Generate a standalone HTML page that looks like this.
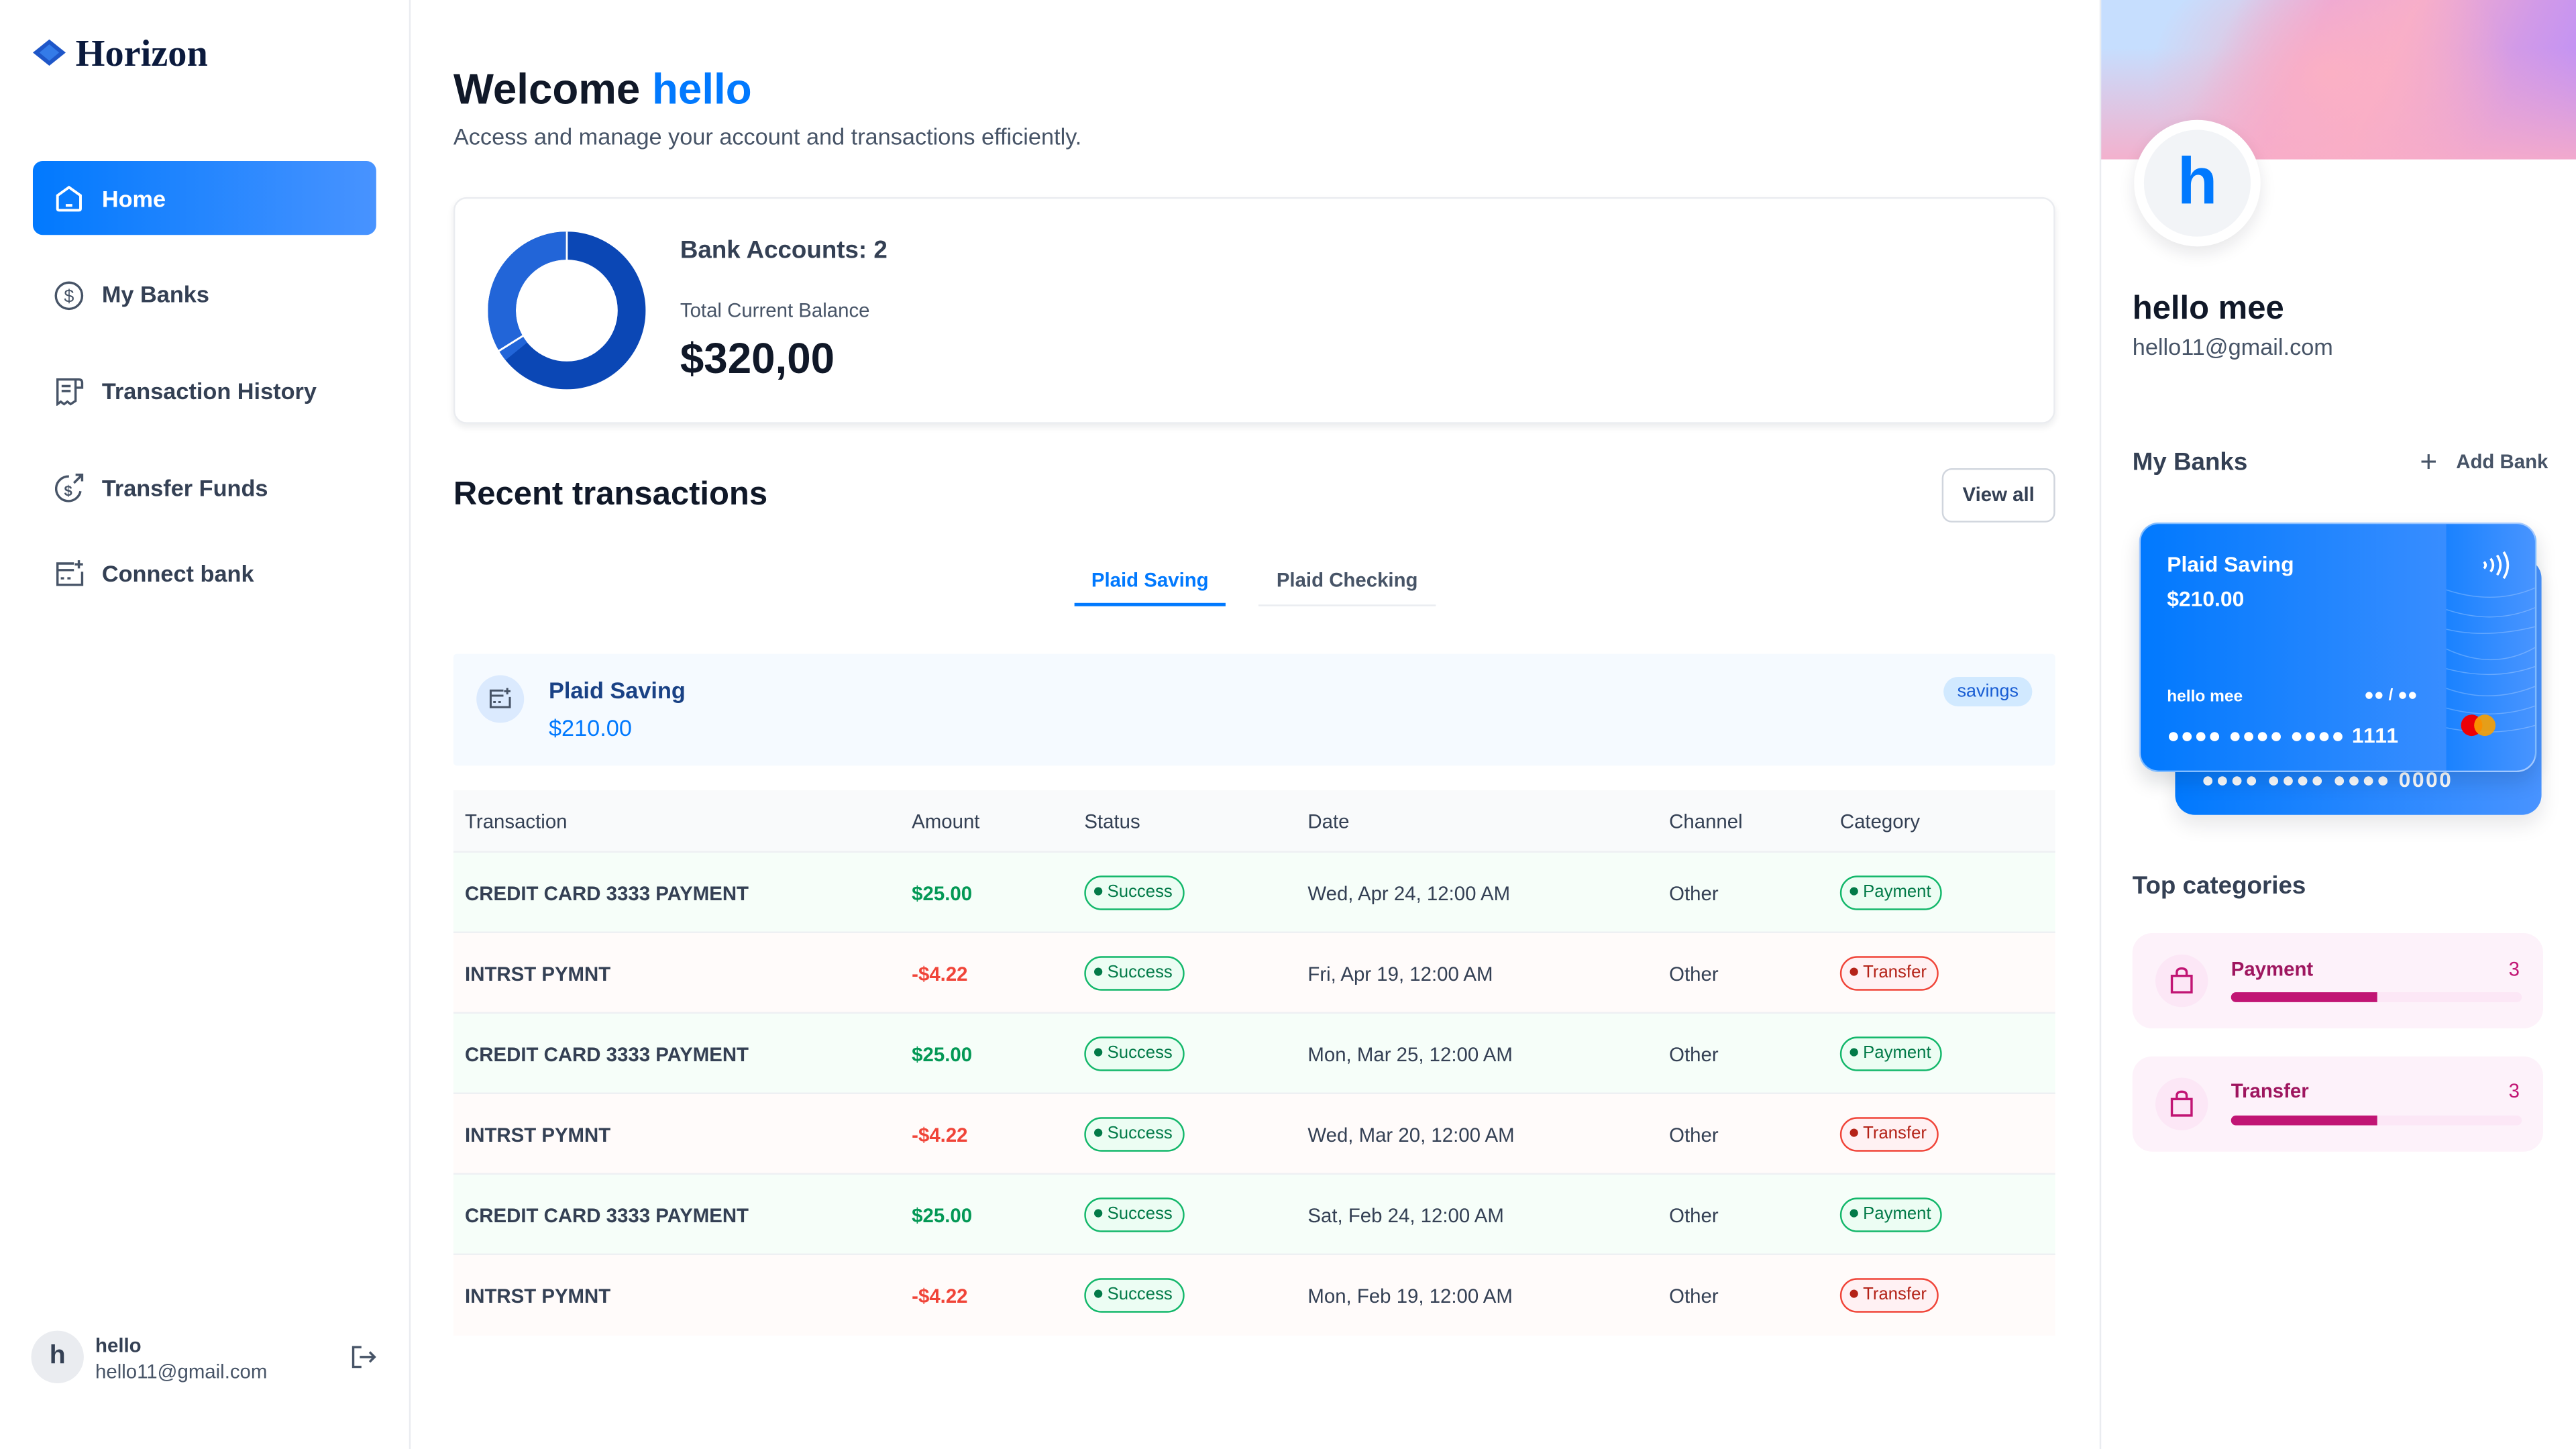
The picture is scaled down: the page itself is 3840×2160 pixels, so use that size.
<!DOCTYPE html>
<html><head><meta charset="utf-8"><style>
*{box-sizing:border-box;margin:0;padding:0}
html,body{width:3840px;height:2160px;overflow:hidden;background:#fff}
#w{position:absolute;left:0;top:0;width:1568px;height:882px;transform:scale(2.44898);transform-origin:0 0;font-family:"Liberation Sans",sans-serif;color:#101828}
.a{position:absolute;white-space:nowrap}
.nav{position:absolute;left:32px;font-size:14px;font-weight:bold;color:#344054;white-space:nowrap}
.nav span{position:absolute;left:30px;top:0;white-space:nowrap}
.row{position:absolute;left:276px;width:975px;height:49px;border-bottom:1px solid #eef0f3;font-size:12px;color:#344054}
.row div{position:absolute;top:18px;white-space:nowrap}
.pill{position:absolute;top:14px!important;height:21px;border-radius:11px;border:1.5px solid;font-size:10.5px;line-height:19px;padding:0 6px 0 5px}
.pill:before{content:"";display:inline-block;width:5px;height:5px;border-radius:50%;background:currentColor;margin-right:3px;vertical-align:1px}
.g{border-color:#12b76a;color:#027a48;background:#ecfdf3}
.r{border-color:#f04438;color:#b42318;background:#fff1f3}
</style></head><body><div id="w">
<!-- sidebar -->
<div class="a" style="left:249px;top:0;width:1px;height:882px;background:#eaecf0"></div>
<svg class="a" style="left:19px;top:23px" width="22" height="20" viewBox="0 0 22 20"><path d="M11 1L21 9L11 17L1 9Z" fill="#1e56c8"/><path d="M5 9L11 4L17 9L11 14Z" fill="#3d8bf5" opacity=".7"/></svg>
<div class="a" style="left:46px;top:20px;font-family:'Liberation Serif',serif;font-size:23px;font-weight:bold;color:#0b1a3d">Horizon</div>
<div class="a" style="left:20px;top:98px;width:209px;height:45px;border-radius:6px;background:linear-gradient(90deg,#0179fe,#4893ff)"></div>
<svg class="a" style="left:33px;top:112px" width="18" height="18" viewBox="0 0 18 18" fill="none" stroke="#fff" stroke-width="1.6"><path d="M2 7L9 2L16 7V15Q16 16 15 16H3Q2 16 2 15Z"/><path d="M7 13H11"/></svg>
<div class="a" style="left:62px;top:113px;font-size:14px;font-weight:bold;color:#fff">Home</div>
<svg class="a" style="left:33px;top:171px" width="18" height="18" viewBox="0 0 18 18" fill="none" stroke="#475467" stroke-width="1.4"><circle cx="9" cy="9" r="8"/><text x="9" y="13" font-size="11" text-anchor="middle" fill="#475467" stroke="none" font-family="Liberation Sans">$</text></svg>
<div class="nav" style="top:171px"><span>My Banks</span></div>
<svg class="a" style="left:33px;top:229px" width="18" height="18" viewBox="0 0 18 18" fill="none" stroke="#475467" stroke-width="1.4"><path d="M13 2H2V17L4 15.5L6 17L8 15.5L10 17L13 15V2ZM13 2H15Q17 2 17 4V7H13M4.5 6H10M4.5 9H10"/></svg>
<div class="nav" style="top:230px"><span>Transaction History</span></div>
<svg class="a" style="left:33px;top:288px" width="19" height="19" viewBox="0 0 19 19" fill="none" stroke="#475467" stroke-width="1.4"><path d="M16 11A7.5 7.5 0 1 1 9 2M12 6L17 1M13 1H17V5"/><text x="8.5" y="14" font-size="9" font-weight="bold" text-anchor="middle" fill="#475467" stroke="none" font-family="Liberation Sans">$</text></svg>
<div class="nav" style="top:289px"><span>Transfer Funds</span></div>
<svg class="a" style="left:33px;top:340px" width="19" height="18" viewBox="0 0 19 18" fill="none" stroke="#475467" stroke-width="1.4"><path d="M12 3H2V16H17V8M2 7H12M4 12H6M8 12H10M15 1V6M12.5 3.5H17.5"/></svg>
<div class="nav" style="top:341px"><span>Connect bank</span></div>
<div class="a" style="left:19px;top:810px;width:32px;height:32px;border-radius:50%;background:#eaecf0;text-align:center;line-height:32px;font-weight:bold;font-size:16px;color:#344054">h</div>
<div class="a" style="left:58px;top:812px;font-size:12px;font-weight:bold;color:#344054">hello</div>
<div class="a" style="left:58px;top:828px;font-size:12px;color:#475467">hello11@gmail.com</div>
<svg class="a" style="left:213px;top:818px" width="16" height="16" viewBox="0 0 16 16" fill="none" stroke="#475467" stroke-width="1.4"><path d="M7 2H2V14H7M6 8H15M12 5L15 8L12 11"/></svg>
<!-- main -->
<div class="a" style="left:276px;top:39px;font-size:26px;font-weight:bold;color:#101828">Welcome <span style="color:#0179fe">hello</span></div>
<div class="a" style="left:276px;top:75px;font-size:14px;color:#475467">Access and manage your account and transactions efficiently.</div>
<div class="a" style="left:276px;top:120px;width:975px;height:138px;border:1px solid #eaecf0;border-radius:8px;box-shadow:0 2px 4px rgba(16,24,40,.08)"></div>
<svg class="a" style="left:297px;top:141px" width="96" height="96" viewBox="0 0 96 96"><circle cx="48" cy="48" r="39.5" fill="none" stroke="#0b47b5" stroke-width="17"/><circle cx="48" cy="48" r="39.5" fill="none" stroke="#2265d8" stroke-width="17" stroke-dasharray="88 300" transform="rotate(141 48 48)"/><line x1="48" y1="0" x2="48" y2="18" stroke="#fff" stroke-width="1.2"/><line x1="6" y1="73" x2="22" y2="63" stroke="#fff" stroke-width="1.2"/></svg>
<div class="a" style="left:414px;top:144px;font-size:15px;font-weight:bold;color:#344054">Bank Accounts: 2</div>
<div class="a" style="left:414px;top:182px;font-size:12px;color:#475467">Total Current Balance</div>
<div class="a" style="left:414px;top:203px;font-size:26px;font-weight:bold;color:#101828">$320,00</div>
<div class="a" style="left:276px;top:290px;font-size:20px;font-weight:bold;color:#101828">Recent transactions</div>
<div class="a" style="left:1182px;top:285px;width:69px;height:33px;border:1px solid #d0d5dd;border-radius:6px;font-size:12px;font-weight:bold;color:#344054;text-align:center;line-height:31px">View all</div>
<div class="a" style="left:654px;top:346px;width:92px;text-align:center;font-size:12px;font-weight:bold;color:#0179fe">Plaid Saving</div>
<div class="a" style="left:654px;top:367px;width:92px;height:2px;background:#0179fe"></div>
<div class="a" style="left:766px;top:346px;width:108px;text-align:center;font-size:12px;font-weight:bold;color:#475467">Plaid Checking</div>
<div class="a" style="left:766px;top:368px;width:108px;height:1px;background:#eaecf0"></div>
<div class="a" style="left:276px;top:398px;width:975px;height:68px;background:#f5faff;border-radius:2px"></div>
<div class="a" style="left:290px;top:411px;width:29px;height:29px;border-radius:50%;background:#dbeafe"></div>
<svg class="a" style="left:297px;top:418px" width="15" height="14" viewBox="0 0 19 18" fill="none" stroke="#475467" stroke-width="1.6"><path d="M12 3H2V16H17V8M2 7H12M4 12H6M8 12H10M15 1V6M12.5 3.5H17.5"/></svg>
<div class="a" style="left:334px;top:412px;font-size:14px;font-weight:bold;color:#194185">Plaid Saving</div>
<div class="a" style="left:334px;top:435px;font-size:14px;color:#0179fe">$210.00</div>
<div class="a" style="left:1183px;top:412px;width:54px;height:18px;border-radius:9px;background:#d1e9ff;color:#175cd3;font-size:11px;text-align:center;line-height:18px">savings</div>
<div class="row" style="top:481px;height:38px;background:#f9fafb"><div style="left:7px;top:12px">Transaction</div><div style="left:279px;top:12px">Amount</div><div style="left:384px;top:12px">Status</div><div style="left:520px;top:12px">Date</div><div style="left:740px;top:12px">Channel</div><div style="left:844px;top:12px">Category</div></div>
<div class="row" style="top:519px;background:#f6fef9"><div style="left:7px;font-weight:bold">CREDIT CARD 3333 PAYMENT</div><div style="left:279px;font-weight:bold;color:#039855">$25.00</div><div class="pill g" style="left:384px">Success</div><div style="left:520px">Wed, Apr 24, 12:00 AM</div><div style="left:740px">Other</div><div class="pill g" style="left:844px">Payment</div></div>
<div class="row" style="top:568px;background:#fffbfa"><div style="left:7px;font-weight:bold">INTRST PYMNT</div><div style="left:279px;font-weight:bold;color:#f04438">-$4.22</div><div class="pill g" style="left:384px">Success</div><div style="left:520px">Fri, Apr 19, 12:00 AM</div><div style="left:740px">Other</div><div class="pill r" style="left:844px">Transfer</div></div>
<div class="row" style="top:617px;background:#f6fef9"><div style="left:7px;font-weight:bold">CREDIT CARD 3333 PAYMENT</div><div style="left:279px;font-weight:bold;color:#039855">$25.00</div><div class="pill g" style="left:384px">Success</div><div style="left:520px">Mon, Mar 25, 12:00 AM</div><div style="left:740px">Other</div><div class="pill g" style="left:844px">Payment</div></div>
<div class="row" style="top:666px;background:#fffbfa"><div style="left:7px;font-weight:bold">INTRST PYMNT</div><div style="left:279px;font-weight:bold;color:#f04438">-$4.22</div><div class="pill g" style="left:384px">Success</div><div style="left:520px">Wed, Mar 20, 12:00 AM</div><div style="left:740px">Other</div><div class="pill r" style="left:844px">Transfer</div></div>
<div class="row" style="top:715px;background:#f6fef9"><div style="left:7px;font-weight:bold">CREDIT CARD 3333 PAYMENT</div><div style="left:279px;font-weight:bold;color:#039855">$25.00</div><div class="pill g" style="left:384px">Success</div><div style="left:520px">Sat, Feb 24, 12:00 AM</div><div style="left:740px">Other</div><div class="pill g" style="left:844px">Payment</div></div>
<div class="row" style="top:764px;background:#fffbfa;border-bottom:none"><div style="left:7px;font-weight:bold">INTRST PYMNT</div><div style="left:279px;font-weight:bold;color:#f04438">-$4.22</div><div class="pill g" style="left:384px">Success</div><div style="left:520px">Mon, Feb 19, 12:00 AM</div><div style="left:740px">Other</div><div class="pill r" style="left:844px">Transfer</div></div>
<!-- right panel -->
<div class="a" style="left:1278px;top:0;width:1px;height:882px;background:#eaecf0"></div>
<div class="a" style="left:1279px;top:0;width:289px;height:97px;background:radial-gradient(ellipse 110px 80px at 140px 45px,#fbb0c4,rgba(251,176,196,0)),linear-gradient(180deg,rgba(248,172,200,0) 30%,rgba(248,172,200,.9) 100%),linear-gradient(115deg,#c6defe 0%,#c6defe 25%,#e7a6dc 42%,#f6aecb 58%,#d19ae8 80%,#b98efc 100%)"></div>
<div class="a" style="left:1299px;top:73px;width:77px;height:77px;border-radius:50%;background:#f2f4f7;border:6px solid #fff;box-shadow:0 4px 10px rgba(16,24,40,.1);text-align:center;line-height:64px;font-size:40px;font-weight:bold;color:#0179fe">h</div>
<div class="a" style="left:1298px;top:177px;font-size:20px;font-weight:bold;color:#101828">hello mee</div>
<div class="a" style="left:1298px;top:203px;font-size:14px;color:#475467">hello11@gmail.com</div>
<div class="a" style="left:1298px;top:273px;font-size:15px;font-weight:bold;color:#344054">My Banks</div>
<div class="a" style="left:1473px;top:271px;font-size:18px;color:#475467">+</div>
<div class="a" style="left:1495px;top:274px;font-size:12px;font-weight:bold;color:#475467">Add Bank</div>
<div class="a" style="left:1324px;top:340px;width:223px;height:156px;border-radius:12px;background:linear-gradient(90deg,#0179fe,#4893ff);box-shadow:0 6px 12px rgba(16,24,40,.1)"></div>
<div class="a" style="left:1340px;top:467px;font-size:13px;font-weight:bold;color:#fff;letter-spacing:1px">●●●● ●●●● ●●●● 0000</div>
<div class="a" style="left:1302px;top:318px;width:242px;height:152px;border-radius:12px;overflow:hidden;background:linear-gradient(90deg,#0179fe,#4893ff);border:1px solid rgba(255,255,255,.5);box-shadow:0 6px 12px rgba(16,24,40,.15)">
<div class="a" style="left:186px;top:0;width:56px;height:152px;background:linear-gradient(90deg,#1a82ff,#4a95ff)"></div>
<svg class="a" style="left:186px;top:30px" width="56" height="120" viewBox="0 0 56 120" fill="none" stroke="rgba(255,255,255,.25)" stroke-width=".6"><path d="M0 10Q30 20 56 8M0 22Q30 32 56 20M0 34Q25 40 56 32M0 46Q30 60 56 44M0 58Q30 66 56 56M0 70Q28 80 56 68M0 82Q30 90 56 80M0 94Q30 100 56 92"/></svg>
<div class="a" style="left:16px;top:17px;font-size:13px;font-weight:bold;color:#fff">Plaid Saving</div>
<div class="a" style="left:16px;top:38px;font-size:13px;font-weight:bold;color:#fff">$210.00</div>
<div class="a" style="left:16px;top:100px;font-size:10px;font-weight:bold;color:#fff">hello mee</div>
<div class="a" style="left:136px;top:99px;font-size:10px;font-weight:bold;color:#fff">●● / ●●</div>
<div class="a" style="left:16px;top:121px;font-size:13px;font-weight:bold;color:#fff;letter-spacing:.5px">●●●● ●●●● ●●●● 1111</div>
<svg class="a" style="left:206px;top:16px" width="20" height="18" viewBox="0 0 20 18" fill="none" stroke="#fff" stroke-width="1.5"><path d="M3 7Q5 9 3 11M7 5Q10 9 7 13M11 3Q15 9 11 15M15 1Q20 9 15 17"/></svg>
<div class="a" style="left:195px;top:116px;width:13px;height:13px;border-radius:50%;background:#ed0006"></div>
<div class="a" style="left:203px;top:116px;width:13px;height:13px;border-radius:50%;background:#f9a000;opacity:.9"></div>
</div>
<div class="a" style="left:1298px;top:531px;font-size:15px;font-weight:bold;color:#344054">Top categories</div>
<div class="a" style="left:1298px;top:568px;width:250px;height:58px;border-radius:12px;background:#fdf2fa"></div>
<div class="a" style="left:1312px;top:581px;width:32px;height:32px;border-radius:50%;background:#fce7f6"></div>
<svg class="a" style="left:1320px;top:588px" width="16" height="18" viewBox="0 0 16 18" fill="none" stroke="#c11574" stroke-width="1.4"><path d="M2 6H14V16H2ZM5 6V4Q5 1.5 8 1.5Q11 1.5 11 4V6"/></svg>
<div class="a" style="left:1358px;top:583px;font-size:12px;font-weight:bold;color:#9e165f">Payment</div>
<div class="a" style="left:1527px;top:583px;font-size:12px;color:#c11574">3</div>
<div class="a" style="left:1358px;top:604px;width:177px;height:6px;border-radius:3px;background:#fce7f6"><div style="width:89px;height:6px;border-radius:3px 0 0 3px;background:#c11574"></div></div>
<div class="a" style="left:1298px;top:643px;width:250px;height:58px;border-radius:12px;background:#fdf2fa"></div>
<div class="a" style="left:1312px;top:656px;width:32px;height:32px;border-radius:50%;background:#fce7f6"></div>
<svg class="a" style="left:1320px;top:663px" width="16" height="18" viewBox="0 0 16 18" fill="none" stroke="#c11574" stroke-width="1.4"><path d="M2 6H14V16H2ZM5 6V4Q5 1.5 8 1.5Q11 1.5 11 4V6"/></svg>
<div class="a" style="left:1358px;top:657px;font-size:12px;font-weight:bold;color:#9e165f">Transfer</div>
<div class="a" style="left:1527px;top:657px;font-size:12px;color:#c11574">3</div>
<div class="a" style="left:1358px;top:679px;width:177px;height:6px;border-radius:3px;background:#fce7f6"><div style="width:89px;height:6px;border-radius:3px 0 0 3px;background:#c11574"></div></div>
</div></body></html>
